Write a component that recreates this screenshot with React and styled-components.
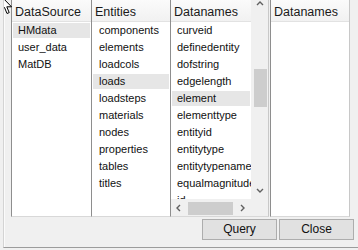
import React from "react";
import styled, { createGlobalStyle } from "styled-components";

const GlobalStyle = createGlobalStyle`
  html, body { margin: 0; padding: 0; background: #f0f0f0; }
  body { font-family: "Liberation Sans", Arial, sans-serif; }
`;

const Window = styled.div`
  position: relative;
  width: 354px;
  height: 247px;
  margin-left: 3px;
  border-left: 1px solid #d4d4d4;
  border-bottom: 1px solid #9c9c9c;
  box-shadow: inset 1px 0 0 #fbfbfb;
  background: #f0f0f0;
  overflow: hidden;
`;

const Panels = styled.div`
  display: flex;
  margin-left: 7px;
  height: 217px;
`;

const Box = styled.div`
  display: flex;
  flex-direction: column;
  width: ${(p) => p.$w}px;
  box-sizing: border-box;
  background: #fff;
  border-left: 1px solid #8e8e8e;
  border-right: ${(p) => (p.$right ? "1px solid #c8c8c8" : "none")};
  border-bottom: 1px solid #d8d8d8;
  margin-left: ${(p) => p.$gap || 0}px;
  overflow: hidden;
`;

const SplitBox = styled(Box)`
  flex-direction: row;
`;

const ListPart = styled.div`
  display: flex;
  flex-direction: column;
  width: 80px;
  min-width: 0;
`;

const Header = styled.div`
  flex: none;
  border-bottom: 1px solid #e2e2e2;
  background: linear-gradient(#fbfbfb, #f1f1f1);
  padding: 3px 0 0 3px;
  height: 18px;
  font-size: 12.5px;
  line-height: 18px;
  color: #1a1a1a;
  white-space: nowrap;
  overflow: hidden;
`;

const List = styled.div`
  flex: 1;
  overflow: hidden;
  min-height: 0;
`;

const Row = styled.div`
  height: 15px;
  margin: 0 1px;
  border-top: 1px solid transparent;
  border-bottom: 1px solid transparent;
  background-clip: padding-box;
  padding-left: ${(p) => p.$pad}px;
  line-height: 15px;
  font-size: 11px;
  color: #111;
  white-space: nowrap;
  background-color: ${(p) => (p.$sel ? "#e6e6e6" : "transparent")};
`;

const VScroll = styled.div`
  width: 17px;
  flex: none;
  display: flex;
  flex-direction: column;
  background: #f0f0f0;
`;

const ScrollTrack = styled.div`
  height: 199px;
  display: flex;
  flex-direction: column;
`;

const ArrowBtn = styled.div`
  height: ${(p) => p.$h}px;
  width: ${(p) => p.$w || "auto"};
  flex: none;
  display: flex;
  align-items: ${(p) => p.$align || "center"};
  justify-content: center;
`;

const Track = styled.div`
  flex: 1;
  display: flex;
  flex-direction: column;
  align-items: center;
`;

const VThumb = styled.div`
  margin-top: 56px;
  width: 13px;
  height: 38px;
  background: #cdcdcd;
  margin-left: 2px;
`;

const Corner = styled.div`
  height: 17px;
  background: #f0f0f0;
`;

const HScroll = styled.div`
  height: 17px;
  flex: none;
  display: flex;
  align-items: center;
  background: #f0f0f0;
`;

const HThumb = styled.div`
  width: 45px;
  height: 13px;
  margin: 1px 2px 0 1px;
  background: #cdcdcd;
`;

const Buttons = styled.div`
  display: flex;
  justify-content: flex-end;
  gap: 2px;
  padding: 2px 4px 0 0;
`;

const Button = styled.button`
  width: 75px;
  height: 21px;
  margin: 0;
  padding: 0;
  background: #e1e1e1;
  border: 1px solid #adadad;
  font-family: "Liberation Sans", Arial, sans-serif;
  font-size: 12px;
  color: #111;
  line-height: 19px;
`;

const Cursor = styled.svg`
  position: absolute;
  left: -4px;
  top: -5px;
`;

const Chevron = ({ dir }) => {
  const paths = {
    up: "M1 5 L4 2 L7 5",
    down: "M1 2 L4 5 L7 2",
    left: "M5 1 L2 4 L5 7",
    right: "M2 1 L5 4 L2 7",
  };
  return (
    <svg width="8" height="8" viewBox="0 0 8 8">
      <path d={paths[dir]} fill="none" stroke="#606060" strokeWidth="1.4" />
    </svg>
  );
};

const sources = ["HMdata", "user_data", "MatDB"];
const entities = [
  "components",
  "elements",
  "loadcols",
  "loads",
  "loadsteps",
  "materials",
  "nodes",
  "properties",
  "tables",
  "titles",
];
const datanames = [
  "curveid",
  "definedentity",
  "dofstring",
  "edgelength",
  "element",
  "elementtype",
  "entityid",
  "entitytype",
  "entitytypename",
  "equalmagnitude",
  "id",
];

export default function App() {
  return (
    <>
      <GlobalStyle />
      <Window>
        <Panels>
          <Box $w={80}>
            <Header>DataSource</Header>
            <List>
              {sources.map((s) => (
                <Row key={s} $pad={5} $sel={s === "HMdata"}>
                  {s}
                </Row>
              ))}
            </List>
          </Box>
          <Box $w={79}>
            <Header>Entities</Header>
            <List>
              {entities.map((s) => (
                <Row key={s} $pad={6} $sel={s === "loads"}>
                  {s}
                </Row>
              ))}
            </List>
          </Box>
          <SplitBox $w={99} $right>
            <ListPart>
              <Header>Datanames</Header>
              <List>
                {datanames.map((s) => (
                  <Row key={s} $pad={5} $sel={s === "element"}>
                    {s}
                  </Row>
                ))}
              </List>
              <HScroll>
                <ArrowBtn $h={17} $w="16px">
                  <Chevron dir="left" />
                </ArrowBtn>
                <HThumb />
                <ArrowBtn $h={17} $w="16px">
                  <Chevron dir="right" />
                </ArrowBtn>
              </HScroll>
            </ListPart>
            <VScroll>
              <ScrollTrack>
                <ArrowBtn $h={13} $align="flex-start">
                  <Chevron dir="up" />
                </ArrowBtn>
                <Track>
                  <VThumb />
                </Track>
                <ArrowBtn $h={16}>
                  <Chevron dir="down" />
                </ArrowBtn>
              </ScrollTrack>
              <Corner />
            </VScroll>
          </SplitBox>
          <Box $w={80} $right $gap={1}>
            <Header>Datanames</Header>
            <List />
          </Box>
        </Panels>
        <Buttons>
          <Button>Query</Button>
          <Button>Close</Button>
        </Buttons>
        <Cursor width="14" height="21" viewBox="0 0 14 21">
          <path
            d="M1 1 L1 16 L4.5 12.5 L7 18.5 L9.2 17.6 L6.8 11.8 L11.5 11.8 Z"
            fill="#fff"
            stroke="#000"
            strokeWidth="1"
          />
        </Cursor>
      </Window>
    </>
  );
}
